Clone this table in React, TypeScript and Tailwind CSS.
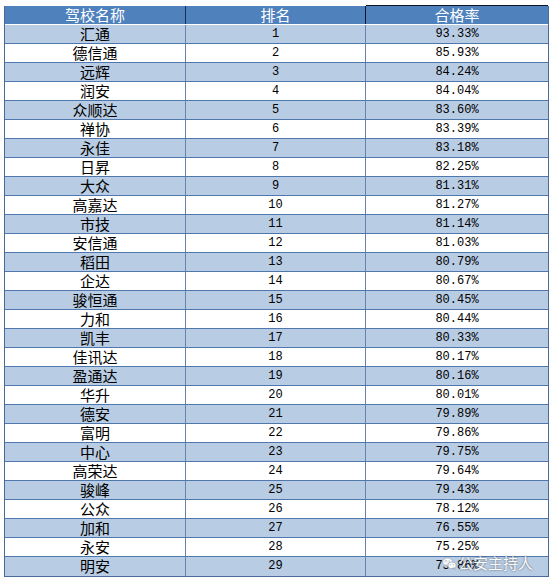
import React from 'react';

const ROWS: [string, string][] = [
  ['汇通', '93.33%'],
  ['德信通', '85.93%'],
  ['远辉', '84.24%'],
  ['润安', '84.04%'],
  ['众顺达', '83.60%'],
  ['禅协', '83.39%'],
  ['永佳', '83.18%'],
  ['日昇', '82.25%'],
  ['大众', '81.31%'],
  ['高嘉达', '81.27%'],
  ['市技', '81.14%'],
  ['安信通', '81.03%'],
  ['稻田', '80.79%'],
  ['企达', '80.67%'],
  ['骏恒通', '80.45%'],
  ['力和', '80.44%'],
  ['凯丰', '80.33%'],
  ['佳讯达', '80.17%'],
  ['盈通达', '80.16%'],
  ['华升', '80.01%'],
  ['德安', '79.89%'],
  ['富明', '79.86%'],
  ['中心', '79.75%'],
  ['高荣达', '79.64%'],
  ['骏峰', '79.43%'],
  ['公众', '78.12%'],
  ['加和', '76.55%'],
  ['永安', '75.25%'],
  ['明安', '73.86%'],
];

const cjk = "font-['Noto_Sans_CJK_SC',sans-serif]";
const mono = "font-['Liberation_Mono','Noto_Sans_CJK_SC',monospace]";

function WeChatIcon() {
  return (
    <svg width="15" height="15" viewBox="0 0 24 24">
      <ellipse cx="9" cy="9.5" rx="8" ry="6.5" fill="#fff" stroke="#9aa4b0" strokeWidth="1.2" />
      <path d="M4 14.5 L3 18 L7 15.5 Z" fill="#fff" stroke="#9aa4b0" strokeWidth="1" />
      <ellipse cx="16" cy="15" rx="6.5" ry="5.3" fill="#fff" stroke="#9aa4b0" strokeWidth="1.2" />
      <path d="M20 19 L21.5 22 L17.5 20 Z" fill="#fff" stroke="#9aa4b0" strokeWidth="1" />
      <circle cx="6.3" cy="8" r="1" fill="#9aa4b0" />
      <circle cx="11.5" cy="8" r="1" fill="#9aa4b0" />
      <circle cx="14" cy="14" r="0.8" fill="#9aa4b0" />
      <circle cx="18.3" cy="14" r="0.8" fill="#9aa4b0" />
    </svg>
  );
}

export default function App() {
  return (
    <div className="relative w-[553px] h-[584px] bg-white pt-[6px] pl-[4px]">
      <div className="w-[545px] border-x border-b border-[#4a6a9c]">
        {/* Header */}
        <div className={`grid grid-cols-[181px_180px_182px] h-[19px] bg-[#4f81bd] border-b border-white text-white text-[15px] leading-[18px] ${cjk}`}>
          <div className="text-center border-r border-[#1c2c4a]">驾校名称</div>
          <div className="text-center border-r border-[#0e1626]">排名</div>
          <div className="text-center border-t border-[#0e1626] -mt-px">合格率</div>
        </div>

        {/* Body */}
        {ROWS.map(([name, rate], i) => (
          <div
            key={name}
            className={`grid grid-cols-[181px_180px_182px] h-[19px] text-black ${
              i % 2 === 0 ? 'bg-[#b8cce4]' : 'bg-white'
            } ${i < ROWS.length - 1 ? 'border-b border-[#4f76ad]' : ''}`}
          >
            <div className={`text-center border-r border-[#6682ad] text-[15px] leading-[18px] ${cjk}`}>{name}</div>
            <div className={`text-center border-r border-[#6682ad] text-[12px] leading-[18px] ${mono}`}>{i + 1}</div>
            <div className={`text-center text-[12px] leading-[18px] ${mono}`}>{rate}</div>
          </div>
        ))}
      </div>

      {/* Watermark */}
      <div className="absolute left-[442px] top-[554px] flex items-center gap-[1px] opacity-90">
        <WeChatIcon />
        <span className={`text-[15px] leading-[18px] text-white [text-shadow:0_0_2px_rgba(60,60,60,0.9)] ${cjk}`}>
          公安主持人
        </span>
      </div>
    </div>
  );
}
